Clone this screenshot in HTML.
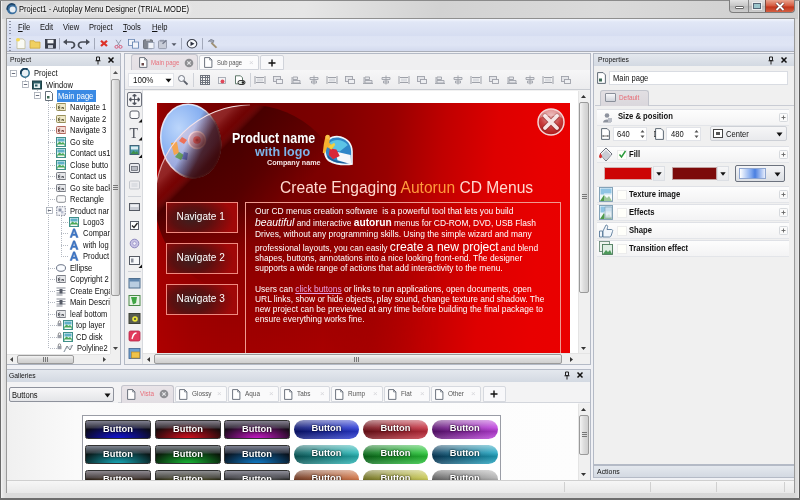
<!DOCTYPE html>
<html><head><meta charset="utf-8"><title>Project1 - Autoplay Menu Designer</title>
<style>
*{box-sizing:border-box;margin:0;padding:0}
html,body{width:800px;height:500px;overflow:hidden}
body{position:relative;background:#f0f0f0;font-family:"Liberation Sans",sans-serif;font-size:8.6px;color:#111;line-height:1}
.a{position:absolute}
.t{position:absolute;white-space:nowrap;line-height:12px;height:12px;font-size:8.5px;transform-origin:0 50%;transform:scaleX(.89)}
.b{font-weight:bold}
u{text-decoration:underline}
#frame{left:0;top:0;width:800px;height:500px;background:linear-gradient(90deg,#f2f2f2 0,#dcdcdc 6px,#d8d8d8 794px,#e6e6e6 800px)}
#title{left:0;top:0;width:800px;height:19px;background:linear-gradient(100deg,#d4d4d4 0%,#e2e2e2 22%,#e6e6e6 38%,#d2d2d2 55%,#dadada 75%,#cecece 100%)}
#menubar{left:7px;top:19px;width:787px;height:17px;background:linear-gradient(#f3f6fd 0,#e1e7f6 3px,#d6ddf1 100%)}
#toolbar{left:7px;top:36px;width:787px;height:16px;background:linear-gradient(#dde3f4 0,#dfe5f5 60%,#d3daee 100%);border-bottom:1px solid #a9adb8}
#client{left:7px;top:52px;width:787px;height:428px;background:#f0f1f5}
#status{left:7px;top:480px;width:787px;height:12px;background:linear-gradient(#f4f4f4,#e6e6e6);border-top:1px solid #c9c9c9}
</style></head><body><div id="all" class="a" style="left:0;top:0;width:800px;height:500px;overflow:hidden;filter:blur(.4px)">
<div id="frame" class="a"></div>
<div id="title" class="a"></div>
<div id="menubar" class="a"></div>
<div id="toolbar" class="a"></div>
<div id="client" class="a"></div>
<div id="status" class="a"></div>
<!--TITLE-->
<div class="a" style="left:0;top:0;width:1px;height:500px;background:#6a6a6a"></div>
<div class="a" style="left:1px;top:0;width:1px;height:500px;background:#f2f2f2"></div>
<div class="a" style="left:799px;top:0;width:1px;height:500px;background:#5a5a5a"></div>
<div class="a" style="left:798px;top:0;width:1px;height:500px;background:#e8e8e8"></div>
<div class="a" style="left:0;top:0;width:800px;height:1px;background:#8a8a8a"></div>
<div class="a" style="left:0;top:498px;width:800px;height:2px;background:#6e6e6e"></div>
<div class="a" style="left:6px;top:18px;width:789px;height:475px;border:1px solid #9a9a9a;border-top-color:#8f8f8f"></div>
<svg class="a" style="left:6px;top:3px" width="12" height="12" viewBox="0 0 12 12"><circle cx="6" cy="6" r="5.2" fill="#3a6f9f"/><circle cx="6.6" cy="6.4" r="3" fill="#e8eef4"/><path d="M1.5 7 A4.6 4.6 0 0 1 9 2.2" stroke="#1d4468" stroke-width="1.6" fill="none"/></svg>
<div class="t" id="ttl" style="left:19px;top:3px;color:#000;text-shadow:0 0 4px #fff,0 0 6px #fff,0 0 8px #fff">Project1 - Autoplay Menu Designer (TRIAL MODE)</div>
<div class="a" style="left:729px;top:0;width:66px;height:13px;border:1px solid #7d7d7d;border-top:none;border-radius:0 0 4px 4px;background:linear-gradient(#e2e2e2,#c6c6c6 50%,#b9b9b9 51%,#cdcdcd);overflow:hidden">
 <div class="a" style="left:18px;top:0;width:1px;height:13px;background:#8a8a8a"></div>
 <div class="a" style="left:35px;top:0;width:30px;height:13px;background:linear-gradient(#e8a48f,#d4553a 48%,#c0321a 52%,#d8694a);border-left:1px solid #7a4a40"></div>
 <div class="a" style="left:5px;top:6px;width:9px;height:3px;background:#fff;border:1px solid #666;border-radius:1px"></div>
 <div class="a" style="left:23px;top:3px;width:8px;height:6px;background:#9cc6cc;border:1px solid #567;box-shadow:0 0 0 1px #eee"></div>
 <svg class="a" style="left:45px;top:2px" width="10" height="9" viewBox="0 0 10 9"><path d="M1.5 1 L8.5 8 M8.5 1 L1.5 8" stroke="#633" stroke-width="3.2"/><path d="M1.5 1 L8.5 8 M8.5 1 L1.5 8" stroke="#fff" stroke-width="1.8"/></svg>
</div>
<!--MENU-->
<div class="a" style="left:9px;top:21px;width:2px;height:14px;background:repeating-linear-gradient(#8d93a6 0 1px,transparent 1px 3px)"></div>
<div class="a" style="left:9px;top:38px;width:2px;height:13px;background:repeating-linear-gradient(#8d93a6 0 1px,transparent 1px 3px)"></div>
<div class="t" style="left:18px;top:21px"><u>F</u>ile</div>
<div class="t" style="left:40px;top:21px">Edit</div>
<div class="t" style="left:63px;top:21px">View</div>
<div class="t" style="left:89px;top:21px">Project</div>
<div class="t" style="left:123px;top:21px"><u>T</u>ools</div>
<div class="t" style="left:152px;top:21px"><u>H</u>elp</div>
<svg class="a" style="left:7px;top:35px" width="230" height="17" viewBox="0 0 230 17"><g transform="translate(0 1.300) scale(1 .88)" opacity=".92">
 <!-- new -->
 <path d="M10 3h6l2 2v9h-8z" fill="#fdfdf5" stroke="#b9b48a" stroke-width=".8"/><circle cx="11" cy="4" r="2" fill="#f6d848"/>
 <!-- open -->
 <path d="M23 5h4l1 1.5h5v7h-10z" fill="#f2cf55" stroke="#c9a02f" stroke-width=".8"/>
 <!-- save -->
 <rect x="38.5" y="3.5" width="10" height="10" fill="#2b2f3c" stroke="#1c1f28" stroke-width=".8"/><rect x="40.5" y="4" width="6" height="4" fill="#f3f5f8"/><rect x="41" y="10" width="5" height="3.5" fill="#c9ced8"/>
 <rect x="52" y="2" width="1" height="13" fill="#9ea4b6"/>
 <!-- undo -->
 <path d="M59 6.5h5a3 3 0 0 1 0 7" fill="none" stroke="#3b3f48" stroke-width="1.8"/><path d="M56 6.5l4-3.5v7z" fill="#3b3f48"/>
 <!-- redo -->
 <path d="M80 6.5h-5a3 3 0 0 0 0 7" fill="none" stroke="#3b3f48" stroke-width="1.8"/><path d="M83 6.5l-4-3.5v7z" fill="#3b3f48"/>
 <rect x="87" y="2" width="1" height="13" fill="#9ea4b6"/>
 <!-- delete -->
 <path d="M94 5l6 6M100 5l-6 6" stroke="#dc2418" stroke-width="2.2"/>
 <!-- cut -->
 <path d="M109 4l4 7M114 4l-4 7" stroke="#8a8fa3" stroke-width="1"/><circle cx="109.5" cy="12" r="1.6" fill="none" stroke="#d64a6a" stroke-width="1"/><circle cx="113.5" cy="12" r="1.6" fill="none" stroke="#d64a6a" stroke-width="1"/>
 <!-- copy -->
 <rect x="121.5" y="3.500" width="6" height="7" fill="#f3f6fb" stroke="#5f7fae" stroke-width=".9"/><rect x="125.5" y="6.500" width="6" height="7" fill="#f3f6fb" stroke="#5f7fae" stroke-width=".9"/>
 <!-- paste -->
 <rect x="136.500" y="4" width="9" height="10" rx="1" fill="#7a7f88" stroke="#50545c" stroke-width=".8"/><rect x="141" y="7" width="6" height="7" fill="#f4f6fa" stroke="#7f8aa0" stroke-width=".7"/><rect x="139" y="3" width="4" height="2" fill="#c9ccd4"/>
 <!-- paste special -->
 <rect x="151.500" y="5" width="8" height="9" rx="1" fill="#c7cbd6" stroke="#7d8496" stroke-width=".8"/><path d="M155 8l4-4 1 1-4 4z" fill="#6b7284"/><rect x="153" y="4" width="4" height="2" fill="#8a90a2"/>
 <path d="M164.500 8h5l-2.500 3z" fill="#4a4f5c"/>
 <rect x="174" y="2" width="1" height="13" fill="#9ea4b6"/>
 <!-- play -->
 <circle cx="185" cy="8.500" r="4.800" fill="#fbfcff" stroke="#2b2f3a" stroke-width="1.100"/><path d="M183.500 6l4 2.500-4 2.500z" fill="#1d2130"/>
 <rect x="195" y="2" width="1" height="13" fill="#9ea4b6"/>
 <!-- build -->
 <path d="M201 6l3-2.500 3 1.500-1 2.500-1.500-.5" fill="#9aa0ae" stroke="#6a7080" stroke-width=".8"/><path d="M204.500 7.500l5 5.500" stroke="#9a8a6a" stroke-width="2"/>
</g></svg>
<!--LEFT-->
<div class="a" style="left:7px;top:53px;width:114px;height:13.500px;background:linear-gradient(#e4e8ee,#d3d9e2);border:1px solid #b4bac6;border-left:none"></div>
<div class="t" style="left:10px;top:53.800px;font-size:7.600px">Project</div>
<svg class="a" style="left:94px;top:55.500px" width="24" height="9" viewBox="0 0 24 9"><path d="M2.500 1h3v3.500h-3zM1.500 4.800h5M4 5v3.500" stroke="#222" stroke-width="1" fill="none"/><path d="M14.500 1.500l5 5M19.500 1.500l-5 5" stroke="#111" stroke-width="1.500"/></svg>
<div class="a" style="left:7px;top:66px;width:114px;height:299px;background:#fff;border:1px solid #aeb4c0;border-left:none;border-top:none"></div>
<div class="a" style="left:13px;top:78px;width:0;height:0"></div>
<svg class="a" style="left:9.5px;top:69.5px" width="7" height="7" viewBox="0 0 7 7"><rect x=".5" y=".5" width="6" height="6" fill="#fff" stroke="#a4aab4" stroke-width=".8"/><path d="M1.800 3.500h3.400" stroke="#596070" stroke-width=".9"/></svg>
<svg class="a" style="left:20px;top:68.0px" width="10" height="10" viewBox="0 0 10 10"><circle cx="5" cy="5" r="4.200" fill="#e9f1f6" stroke="#2f6f8f" stroke-width="1.500"/><path d="M1 6A4.200 4.200 0 0 1 7.500 1.500" stroke="#173f5a" stroke-width="1.800" fill="none"/></svg>
<div class="t" style="left:34px;top:67.0px">Project</div>
<svg class="a" style="left:21.5px;top:81.0px" width="7" height="7" viewBox="0 0 7 7"><rect x=".5" y=".5" width="6" height="6" fill="#fff" stroke="#a4aab4" stroke-width=".8"/><path d="M1.800 3.500h3.400" stroke="#596070" stroke-width=".9"/></svg>
<svg class="a" style="left:32px;top:79.5px" width="10" height="10" viewBox="0 0 10 10"><rect x=".5" y="1" width="9" height="8" fill="#2c5d64" stroke="#1f4046"/><rect x="2" y="3.500" width="6" height="4.500" fill="#e8f2f2"/><rect x="3" y="4.500" width="2.500" height="2" fill="#2c5d64"/></svg>
<div class="t" style="left:46px;top:78.5px">Window</div>
<svg class="a" style="left:33.5px;top:92.4px" width="7" height="7" viewBox="0 0 7 7"><rect x=".5" y=".5" width="6" height="6" fill="#fff" stroke="#a4aab4" stroke-width=".8"/><path d="M1.800 3.500h3.400" stroke="#596070" stroke-width=".9"/></svg>
<svg class="a" style="left:44px;top:90.9px" width="10" height="10" viewBox="0 0 10 10"><path d="M1.500.5h5l2 2v7h-7z" fill="#fff" stroke="#55606c" stroke-width=".9"/><rect x="3" y="5" width="2.500" height="2.500" fill="#3c6a55"/></svg>
<div class="a" style="left:56.5px;top:90.4px;width:39px;height:11.500px;background:#3a8ae4"></div>
<div class="t" style="left:58px;top:89.9px;color:#fff">Main page</div>
<div class="a" style="left:48px;top:107.4px;width:7px;height:1px;background:repeating-linear-gradient(90deg,#b4b9c2 0 1px,transparent 1px 2px)"></div>
<svg class="a" style="left:56px;top:102.4px" width="10" height="10" viewBox="0 0 10 10"><rect x=".5" y="1.500" width="9.500" height="7" rx="1" fill="#efe9c9" stroke="#8a8148" stroke-width=".9"/><path d="M2.500 4v3M3 4h1.200M3 5.500h1.200M3 7h1.200M6 5v2M6 5.500h1.500v1.500" stroke="#4f4a2a" stroke-width=".8" fill="none"/></svg>
<div class="t" style="left:70px;top:101.4px">Navigate 1</div>
<div class="a" style="left:48px;top:118.8px;width:7px;height:1px;background:repeating-linear-gradient(90deg,#b4b9c2 0 1px,transparent 1px 2px)"></div>
<svg class="a" style="left:56px;top:113.8px" width="10" height="10" viewBox="0 0 10 10"><rect x=".5" y="1.500" width="9.500" height="7" rx="1" fill="#efe9c9" stroke="#8a8148" stroke-width=".9"/><path d="M2.500 4v3M3 4h1.200M3 5.500h1.200M3 7h1.200M6 5v2M6 5.500h1.500v1.500" stroke="#4f4a2a" stroke-width=".8" fill="none"/></svg>
<div class="t" style="left:70px;top:112.8px">Navigate 2</div>
<div class="a" style="left:48px;top:130.3px;width:7px;height:1px;background:repeating-linear-gradient(90deg,#b4b9c2 0 1px,transparent 1px 2px)"></div>
<svg class="a" style="left:56px;top:125.3px" width="10" height="10" viewBox="0 0 10 10"><rect x=".5" y="1.500" width="9.500" height="7" rx="1" fill="#f3dcd6" stroke="#a8584c" stroke-width=".9"/><path d="M2.500 4v3M3 4h1.200M3 5.500h1.200M3 7h1.200M6 5v2M6 5.500h1.500v1.500" stroke="#6a2f28" stroke-width=".8" fill="none"/></svg>
<div class="t" style="left:70px;top:124.3px">Navigate 3</div>
<div class="a" style="left:48px;top:141.8px;width:7px;height:1px;background:repeating-linear-gradient(90deg,#b4b9c2 0 1px,transparent 1px 2px)"></div>
<svg class="a" style="left:56px;top:136.8px" width="10" height="10" viewBox="0 0 10 10"><rect x=".5" y=".5" width="9" height="9" fill="#eaf5f4" stroke="#3f8f8a" stroke-width="1"/><rect x="1.500" y="1.500" width="7" height="3" fill="#5fb0c8"/><path d="M1 7l2.500-2.500 2 1.500 1.500-1 2 2v2h-8z" fill="#4aa858"/><rect x="1.500" y="7.500" width="7" height="1.500" fill="#f4f8f8"/></svg>
<div class="t" style="left:70px;top:135.8px">Go site</div>
<div class="a" style="left:48px;top:153.2px;width:7px;height:1px;background:repeating-linear-gradient(90deg,#b4b9c2 0 1px,transparent 1px 2px)"></div>
<svg class="a" style="left:56px;top:148.2px" width="10" height="10" viewBox="0 0 10 10"><rect x=".5" y=".5" width="9" height="9" fill="#eaf5f4" stroke="#3f8f8a" stroke-width="1"/><rect x="1.500" y="1.500" width="7" height="3" fill="#5fb0c8"/><path d="M1 7l2.500-2.500 2 1.500 1.500-1 2 2v2h-8z" fill="#4aa858"/><rect x="1.500" y="7.500" width="7" height="1.500" fill="#f4f8f8"/></svg>
<div class="t" style="left:70px;top:147.2px">Contact us1</div>
<div class="a" style="left:48px;top:164.7px;width:7px;height:1px;background:repeating-linear-gradient(90deg,#b4b9c2 0 1px,transparent 1px 2px)"></div>
<svg class="a" style="left:56px;top:159.7px" width="10" height="10" viewBox="0 0 10 10"><rect x=".5" y=".5" width="9" height="9" fill="#eaf5f4" stroke="#3f8f8a" stroke-width="1"/><rect x="1.500" y="1.500" width="7" height="3" fill="#5fb0c8"/><path d="M1 7l2.500-2.500 2 1.500 1.500-1 2 2v2h-8z" fill="#4aa858"/><rect x="1.500" y="7.500" width="7" height="1.500" fill="#f4f8f8"/></svg>
<div class="t" style="left:70px;top:158.7px">Close butto</div>
<div class="a" style="left:48px;top:176.1px;width:7px;height:1px;background:repeating-linear-gradient(90deg,#b4b9c2 0 1px,transparent 1px 2px)"></div>
<svg class="a" style="left:56px;top:171.1px" width="10" height="10" viewBox="0 0 10 10"><rect x=".5" y="1.500" width="9.500" height="7" rx="1" fill="#e6e7ea" stroke="#6c6f78" stroke-width=".9"/><path d="M2.500 4v3M3 4h1.200M3 5.500h1.200M3 7h1.200M6 5v2M6 5.500h1.500v1.500" stroke="#3f424a" stroke-width=".8" fill="none"/></svg>
<div class="t" style="left:70px;top:170.1px">Contact us</div>
<div class="a" style="left:48px;top:187.6px;width:7px;height:1px;background:repeating-linear-gradient(90deg,#b4b9c2 0 1px,transparent 1px 2px)"></div>
<svg class="a" style="left:56px;top:182.6px" width="10" height="10" viewBox="0 0 10 10"><rect x=".5" y="1.500" width="9.500" height="7" rx="1" fill="#e6e7ea" stroke="#6c6f78" stroke-width=".9"/><path d="M2.500 4v3M3 4h1.200M3 5.500h1.200M3 7h1.200M6 5v2M6 5.500h1.500v1.500" stroke="#3f424a" stroke-width=".8" fill="none"/></svg>
<div class="t" style="left:70px;top:181.6px">Go site back</div>
<div class="a" style="left:48px;top:199.1px;width:7px;height:1px;background:repeating-linear-gradient(90deg,#b4b9c2 0 1px,transparent 1px 2px)"></div>
<svg class="a" style="left:56px;top:194.1px" width="10" height="10" viewBox="0 0 10 10"><rect x=".7" y="1.700" width="9" height="6.600" rx="1.800" fill="#fafafa" stroke="#7c7f86" stroke-width=".9"/></svg>
<div class="t" style="left:70px;top:193.1px">Rectangle</div>
<svg class="a" style="left:45.5px;top:207.0px" width="7" height="7" viewBox="0 0 7 7"><rect x=".5" y=".5" width="6" height="6" fill="#fff" stroke="#a4aab4" stroke-width=".8"/><path d="M1.800 3.500h3.400" stroke="#596070" stroke-width=".9"/></svg>
<svg class="a" style="left:56px;top:205.5px" width="10" height="10" viewBox="0 0 10 10"><rect x=".7" y=".7" width="8.600" height="8.600" fill="#f4f5f8" stroke="#6c7384" stroke-width=".9" stroke-dasharray="1.500 1"/><rect x="2.500" y="2.500" width="3" height="3" fill="#8b93a8"/><rect x="5" y="5" width="2.500" height="2.500" fill="#b9bfd0"/></svg>
<div class="t" style="left:70px;top:204.5px">Product nar</div>
<div class="a" style="left:61px;top:222.0px;width:7px;height:1px;background:repeating-linear-gradient(90deg,#b4b9c2 0 1px,transparent 1px 2px)"></div>
<svg class="a" style="left:69px;top:217.0px" width="10" height="10" viewBox="0 0 10 10"><rect x=".5" y=".5" width="9" height="9" fill="#eaf5f4" stroke="#3f8f8a" stroke-width="1"/><rect x="1.500" y="1.500" width="7" height="3" fill="#5fb0c8"/><path d="M1 7l2.500-2.500 2 1.500 1.500-1 2 2v2h-8z" fill="#4aa858"/><rect x="1.500" y="7.500" width="7" height="1.500" fill="#f4f8f8"/></svg>
<div class="t" style="left:83px;top:216.0px">Logo3</div>
<div class="a" style="left:61px;top:233.4px;width:7px;height:1px;background:repeating-linear-gradient(90deg,#b4b9c2 0 1px,transparent 1px 2px)"></div>
<svg class="a" style="left:69px;top:228.4px" width="10" height="10" viewBox="0 0 10 10"><path d="M1 9.500L4.300.8h1.600L9.200 9.500H7.300L6.600 7.500H3.500L2.800 9.500z M4 6h2.200L5.100 2.800z" fill="#3f78c8" stroke="#2a5aa3" stroke-width=".4"/></svg>
<div class="t" style="left:83px;top:227.4px">Compan</div>
<div class="a" style="left:61px;top:244.9px;width:7px;height:1px;background:repeating-linear-gradient(90deg,#b4b9c2 0 1px,transparent 1px 2px)"></div>
<svg class="a" style="left:69px;top:239.9px" width="10" height="10" viewBox="0 0 10 10"><path d="M1 9.500L4.300.8h1.600L9.200 9.500H7.300L6.600 7.500H3.500L2.800 9.500z M4 6h2.200L5.100 2.800z" fill="#3f78c8" stroke="#2a5aa3" stroke-width=".4"/></svg>
<div class="t" style="left:83px;top:238.9px">with log</div>
<div class="a" style="left:61px;top:256.4px;width:7px;height:1px;background:repeating-linear-gradient(90deg,#b4b9c2 0 1px,transparent 1px 2px)"></div>
<svg class="a" style="left:69px;top:251.4px" width="10" height="10" viewBox="0 0 10 10"><path d="M1 9.500L4.300.8h1.600L9.200 9.500H7.300L6.600 7.500H3.500L2.800 9.500z M4 6h2.200L5.100 2.800z" fill="#3f78c8" stroke="#2a5aa3" stroke-width=".4"/></svg>
<div class="t" style="left:83px;top:250.4px">Product</div>
<div class="a" style="left:48px;top:267.8px;width:7px;height:1px;background:repeating-linear-gradient(90deg,#b4b9c2 0 1px,transparent 1px 2px)"></div>
<svg class="a" style="left:56px;top:262.8px" width="10" height="10" viewBox="0 0 10 10"><ellipse cx="5" cy="5" rx="4.500" ry="3.300" fill="#fafcff" stroke="#5a6478" stroke-width=".9"/></svg>
<div class="t" style="left:70px;top:261.8px">Ellipse</div>
<div class="a" style="left:48px;top:279.3px;width:7px;height:1px;background:repeating-linear-gradient(90deg,#b4b9c2 0 1px,transparent 1px 2px)"></div>
<svg class="a" style="left:56px;top:274.3px" width="10" height="10" viewBox="0 0 10 10"><rect x=".5" y="1.500" width="9.500" height="7" rx="1" fill="#e6e7ea" stroke="#6c6f78" stroke-width=".9"/><path d="M2.500 4v3M3 4h1.200M3 5.500h1.200M3 7h1.200M6 5v2M6 5.500h1.500v1.500" stroke="#3f424a" stroke-width=".8" fill="none"/></svg>
<div class="t" style="left:70px;top:273.3px">Copyright 2</div>
<div class="a" style="left:48px;top:290.7px;width:7px;height:1px;background:repeating-linear-gradient(90deg,#b4b9c2 0 1px,transparent 1px 2px)"></div>
<svg class="a" style="left:56px;top:285.7px" width="10" height="10" viewBox="0 0 10 10"><path d="M.5 2h9M.5 4.500h9M.5 7h9M.5 9h6" stroke="#7a7f8a" stroke-width=".9"/><rect x="3.500" y="3" width="3" height="4.500" fill="#555a66"/></svg>
<div class="t" style="left:70px;top:284.7px">Create Enga</div>
<div class="a" style="left:48px;top:302.2px;width:7px;height:1px;background:repeating-linear-gradient(90deg,#b4b9c2 0 1px,transparent 1px 2px)"></div>
<svg class="a" style="left:56px;top:297.2px" width="10" height="10" viewBox="0 0 10 10"><path d="M.5 2h9M.5 4.500h9M.5 7h9M.5 9h6" stroke="#7a7f8a" stroke-width=".9"/><rect x="3.500" y="3" width="3" height="4.500" fill="#555a66"/></svg>
<div class="t" style="left:70px;top:296.2px">Main Descri</div>
<div class="a" style="left:48px;top:313.7px;width:7px;height:1px;background:repeating-linear-gradient(90deg,#b4b9c2 0 1px,transparent 1px 2px)"></div>
<svg class="a" style="left:56px;top:308.7px" width="10" height="10" viewBox="0 0 10 10"><rect x=".5" y="1.500" width="9.500" height="7" rx="1" fill="#e6e7ea" stroke="#6c6f78" stroke-width=".9"/><path d="M2.500 4v3M3 4h1.200M3 5.500h1.200M3 7h1.200M6 5v2M6 5.500h1.500v1.500" stroke="#3f424a" stroke-width=".8" fill="none"/></svg>
<div class="t" style="left:70px;top:307.7px">leaf bottom</div>
<div class="a" style="left:50px;top:325.1px;width:7px;height:1px;background:repeating-linear-gradient(90deg,#b4b9c2 0 1px,transparent 1px 2px)"></div>
<svg class="a" style="left:57px;top:320.1px" width="5" height="7" viewBox="0 0 5 7"><path d="M1.300 3V2a1.200 1.200 0 0 1 2.400 0v1" fill="none" stroke="#777" stroke-width=".8"/><rect x=".5" y="3" width="4" height="3.200" fill="#9a9da6"/></svg>
<svg class="a" style="left:63px;top:320.1px" width="10" height="10" viewBox="0 0 10 10"><rect x=".5" y=".5" width="9" height="9" fill="#eaf5f4" stroke="#3f8f8a" stroke-width="1"/><rect x="1.500" y="1.500" width="7" height="3" fill="#5fb0c8"/><path d="M1 7l2.500-2.500 2 1.500 1.500-1 2 2v2h-8z" fill="#4aa858"/><rect x="1.500" y="7.500" width="7" height="1.500" fill="#f4f8f8"/></svg>
<div class="t" style="left:76px;top:319.1px">top layer</div>
<div class="a" style="left:50px;top:336.6px;width:7px;height:1px;background:repeating-linear-gradient(90deg,#b4b9c2 0 1px,transparent 1px 2px)"></div>
<svg class="a" style="left:57px;top:331.6px" width="5" height="7" viewBox="0 0 5 7"><path d="M1.300 3V2a1.200 1.200 0 0 1 2.400 0v1" fill="none" stroke="#777" stroke-width=".8"/><rect x=".5" y="3" width="4" height="3.200" fill="#9a9da6"/></svg>
<svg class="a" style="left:63px;top:331.6px" width="10" height="10" viewBox="0 0 10 10"><rect x=".5" y=".5" width="9" height="9" fill="#eaf5f4" stroke="#3f8f8a" stroke-width="1"/><rect x="1.500" y="1.500" width="7" height="3" fill="#5fb0c8"/><path d="M1 7l2.500-2.500 2 1.500 1.500-1 2 2v2h-8z" fill="#4aa858"/><rect x="1.500" y="7.500" width="7" height="1.500" fill="#f4f8f8"/></svg>
<div class="t" style="left:76px;top:330.6px">CD disk</div>
<div class="a" style="left:50px;top:348.0px;width:7px;height:1px;background:repeating-linear-gradient(90deg,#b4b9c2 0 1px,transparent 1px 2px)"></div>
<svg class="a" style="left:57px;top:343.0px" width="5" height="7" viewBox="0 0 5 7"><path d="M1.300 3V2a1.200 1.200 0 0 1 2.400 0v1" fill="none" stroke="#777" stroke-width=".8"/><rect x=".5" y="3" width="4" height="3.200" fill="#9a9da6"/></svg>
<svg class="a" style="left:63px;top:343.0px" width="10" height="10" viewBox="0 0 10 10"><path d="M1 9L4 3l3 4 2.500-5" fill="none" stroke="#7a8086" stroke-width="1"/><path d="M1 9c2-5 5-4 8-7" fill="none" stroke="#a9b7c4" stroke-width=".8"/></svg>
<div class="t" style="left:77px;top:342.0px">Polyline2</div>
<div class="a" style="left:48px;top:100.9px;width:1px;height:247.1px;background:repeating-linear-gradient(#b4b9c2 0 1px,transparent 1px 2px)"></div>
<div class="a" style="left:61px;top:215.5px;width:1px;height:40.8px;background:repeating-linear-gradient(#b4b9c2 0 1px,transparent 1px 2px)"></div>
<div class="a" style="left:25px;top:78.0px;width:1px;height:2.5px;background:repeating-linear-gradient(#b4b9c2 0 1px,transparent 1px 2px)"></div>
<div class="a" style="left:37px;top:89.5px;width:1px;height:2.5px;background:repeating-linear-gradient(#b4b9c2 0 1px,transparent 1px 2px)"></div>
<div class="a" style="left:110px;top:66px;width:10px;height:288px;background:#f0f0f0;border-left:1px solid #e2e2e2"></div>
<div class="a" style="left:111px;top:79px;width:9px;height:217px;background:linear-gradient(90deg,#f3f3f3,#dadada 50%,#cfcfcf);border:1px solid #9a9a9a;border-radius:2px"></div>
<div class="a" style="left:113px;top:185px;width:5px;height:5px;background:repeating-linear-gradient(#777 0 1px,transparent 1px 2px)"></div>
<svg class="a" style="left:112px;top:70px" width="7" height="5" viewBox="0 0 7 5"><path d="M1 4l2.500-3 2.500 3z" fill="#555"/></svg>
<svg class="a" style="left:112px;top:346px" width="7" height="5" viewBox="0 0 7 5"><path d="M1 1l2.500 3 2.500-3z" fill="#444"/></svg>
<div class="a" style="left:7px;top:354px;width:113px;height:10px;background:#f0f0f0;border-top:1px solid #e2e2e2"></div>
<div class="a" style="left:17px;top:355px;width:57px;height:9px;background:linear-gradient(#f3f3f3,#dadada 50%,#cfcfcf);border:1px solid #9a9a9a;border-radius:2px"></div>
<div class="a" style="left:43px;top:357px;width:5px;height:5px;background:repeating-linear-gradient(90deg,#777 0 1px,transparent 1px 2px)"></div>
<svg class="a" style="left:9px;top:356px" width="5" height="7" viewBox="0 0 5 7"><path d="M4 1l-3 2.500 3 2.500z" fill="#444"/></svg>
<svg class="a" style="left:102px;top:356px" width="5" height="7" viewBox="0 0 5 7"><path d="M1 1l3 2.500-3 2.500z" fill="#444"/></svg>
<div class="a" style="left:110px;top:354px;width:10px;height:10px;background:#f0f0f0"></div>
<!--CENTER-->
<div class="a" style="left:124px;top:53px;width:467px;height:312px;background:#f1f1f1;border:1px solid #b4bac6"></div>
<div class="a" style="left:125px;top:54px;width:465px;height:16.500px;background:#efeff1;border-bottom:1px solid #c6cad2"></div>
<div class="a" style="left:131px;top:54px;width:67px;height:17px;background:linear-gradient(#e9e4e8,#e3dfe4);border:1px solid #c4c4cc;border-bottom:none;border-radius:3px 3px 0 0"></div>
<div class="a" style="left:199px;top:55px;width:60px;height:15px;background:#fbfbfc;border:1px solid #d0d3da;border-radius:2px 2px 0 0"></div>
<div class="a" style="left:260px;top:55px;width:24px;height:15px;background:#f8f8fa;border:1px solid #d0d3da;border-radius:2px 2px 0 0"></div>
<svg class="a" style="left:139px;top:57px" width="9" height="11" viewBox="0 0 9 11"><path d="M.6.6h5l2.300 2.300v7.500h-7.300z" fill="#fff" stroke="#5c6470" stroke-width=".9"/><path d="M5.600.6v2.300h2.300" fill="none" stroke="#5c6470" stroke-width=".7"/><rect x="2.500" y="6" width="2.500" height="2.500" fill="#6b4a4a"/></svg>
<div class="t" style="left:151px;top:56.5px;color:#e8707c;font-size:6.800px">Main page</div>
<svg class="a" style="left:184px;top:58px" width="10" height="10" viewBox="0 0 10 10"><circle cx="5" cy="5" r="4.300" fill="#8e8e92"/><path d="M3.300 3.300l3.400 3.400M6.700 3.300l-3.400 3.400" stroke="#e6e6e8" stroke-width="1.200"/></svg>
<svg class="a" style="left:204px;top:57px" width="9" height="11" viewBox="0 0 9 11"><path d="M.6.6h5l2.300 2.300v7.500h-7.300z" fill="#fff" stroke="#5c6470" stroke-width=".9"/><path d="M5.600.6v2.300h2.300" fill="none" stroke="#5c6470" stroke-width=".7"/></svg>
<div class="t" style="left:217px;top:56.5px;color:#555;font-size:6.600px">Sub page</div>
<div class="t" style="left:249px;top:56.5px;color:#d6d6db;font-size:8px;transform:none">×</div>
<svg class="a" style="left:268px;top:59px" width="8" height="8" viewBox="0 0 8 8"><path d="M4 .5v7M.5 4h7" stroke="#111" stroke-width="1.400"/></svg>
<div class="a" style="left:125px;top:70px;width:465px;height:20px;background:linear-gradient(#f6f6f7,#ececee);border-bottom:1px solid #c9ccd2"></div>
<div class="a" style="left:128px;top:73px;width:46px;height:14px;background:#fff;border:1px solid #e1e3e8"></div>
<div class="t" style="left:133px;top:74px;font-size:9px">100%</div>
<svg class="a" style="left:165px;top:78px" width="7" height="5" viewBox="0 0 7 5"><path d="M.5.8h6L3.500 4.500z" fill="#111"/></svg>
<svg class="a" style="left:177px;top:74px" width="12" height="12" viewBox="0 0 12 12"><circle cx="4.500" cy="4.500" r="3" fill="#f4f6fa" stroke="#70757f" stroke-width="1"/><path d="M6.800 6.800l3.700 3.700" stroke="#5a5f69" stroke-width="1.800"/></svg>
<div class="a" style="left:193px;top:73px;width:1px;height:14px;background:#cfd2d8"></div>
<div class="a" style="left:200px;top:75px;width:10px;height:10px;background:repeating-linear-gradient(90deg,#6d727c 0 1px,transparent 1px 2.250px),repeating-linear-gradient(#6d727c 0 1px,#f2f2f2 1px 2.250px)"></div>
<svg class="a" style="left:217px;top:75px" width="30" height="11" viewBox="0 0 30 11"><rect x="1.500" y="2.500" width="7" height="6" fill="#f4f4f6" stroke="#9a9ea8" stroke-width=".8"/><circle cx="5.500" cy="6.500" r="2" fill="#e0485a"/><path d="M18.500.8h5l2 2v6h-7z" fill="#fff" stroke="#4e6a5a" stroke-width=".9"/><rect x="21" y="5.500" width="7" height="4" rx="2" fill="#dfe6e2" stroke="#222" stroke-width=".9"/><circle cx="26" cy="7.500" r="1.300" fill="#222"/></svg>
<div class="a" style="left:250px;top:73px;width:1px;height:14px;background:#cfd2d8"></div>
<svg class="a" style="left:0;top:74px" width="600" height="12" viewBox="0 0 600 12"><path d="M255 2v8M265 2v8M256 3.500h8M256 8.500h8" stroke="#9ea1a9" stroke-width="1" fill="none"/><rect x="257" y="4.500" width="6" height="3" fill="#d9dbe0"/><rect x="273.5" y="2.500" width="7" height="5" fill="#e4e5e9" stroke="#9ea1a9" stroke-width=".9"/><rect x="276.5" y="5.500" width="6" height="4" fill="#eeeff2" stroke="#9ea1a9" stroke-width=".9"/><path d="M291 9.500h10M292 9V3M293 6.500h7v2.500h-7zM293 3h4.500v2.500h-4.500z" stroke="#9ea1a9" stroke-width=".9" fill="#e7e8ec"/><path d="M314 1.500v9M310 3.500h8v2h-8zM311.5 7h5v2h-5z" stroke="#9ea1a9" stroke-width=".9" fill="#e7e8ec"/><path d="M327 2v8M337 2v8M328 3.500h8M328 8.500h8" stroke="#9ea1a9" stroke-width="1" fill="none"/><rect x="329" y="4.500" width="6" height="3" fill="#d9dbe0"/><rect x="345.5" y="2.500" width="7" height="5" fill="#e4e5e9" stroke="#9ea1a9" stroke-width=".9"/><rect x="348.5" y="5.500" width="6" height="4" fill="#eeeff2" stroke="#9ea1a9" stroke-width=".9"/><path d="M363 9.500h10M364 9V3M365 6.500h7v2.500h-7zM365 3h4.500v2.500h-4.500z" stroke="#9ea1a9" stroke-width=".9" fill="#e7e8ec"/><path d="M386 1.500v9M382 3.500h8v2h-8zM383.5 7h5v2h-5z" stroke="#9ea1a9" stroke-width=".9" fill="#e7e8ec"/><path d="M399 2v8M409 2v8M400 3.500h8M400 8.500h8" stroke="#9ea1a9" stroke-width="1" fill="none"/><rect x="401" y="4.500" width="6" height="3" fill="#d9dbe0"/><rect x="417.5" y="2.500" width="7" height="5" fill="#e4e5e9" stroke="#9ea1a9" stroke-width=".9"/><rect x="420.5" y="5.500" width="6" height="4" fill="#eeeff2" stroke="#9ea1a9" stroke-width=".9"/><path d="M435 9.500h10M436 9V3M437 6.500h7v2.500h-7zM437 3h4.500v2.500h-4.500z" stroke="#9ea1a9" stroke-width=".9" fill="#e7e8ec"/><path d="M458 1.500v9M454 3.500h8v2h-8zM455.5 7h5v2h-5z" stroke="#9ea1a9" stroke-width=".9" fill="#e7e8ec"/><path d="M471 2v8M481 2v8M472 3.500h8M472 8.500h8" stroke="#9ea1a9" stroke-width="1" fill="none"/><rect x="473" y="4.500" width="6" height="3" fill="#d9dbe0"/><rect x="489.5" y="2.500" width="7" height="5" fill="#e4e5e9" stroke="#9ea1a9" stroke-width=".9"/><rect x="492.5" y="5.500" width="6" height="4" fill="#eeeff2" stroke="#9ea1a9" stroke-width=".9"/><path d="M507 9.500h10M508 9V3M509 6.500h7v2.500h-7zM509 3h4.500v2.500h-4.500z" stroke="#9ea1a9" stroke-width=".9" fill="#e7e8ec"/><path d="M530 1.500v9M526 3.500h8v2h-8zM527.5 7h5v2h-5z" stroke="#9ea1a9" stroke-width=".9" fill="#e7e8ec"/><path d="M543 2v8M553 2v8M544 3.500h8M544 8.500h8" stroke="#9ea1a9" stroke-width="1" fill="none"/><rect x="545" y="4.500" width="6" height="3" fill="#d9dbe0"/><rect x="561.5" y="2.500" width="7" height="5" fill="#e4e5e9" stroke="#9ea1a9" stroke-width=".9"/><rect x="564.5" y="5.500" width="6" height="4" fill="#eeeff2" stroke="#9ea1a9" stroke-width=".9"/></svg>
<div class="a" style="left:125px;top:90px;width:18px;height:274px;background:#f0f0f1;border-right:1px solid #d8dade"></div>
<div class="a" style="left:127px;top:92px;width:15px;height:15px;background:#f2f2f4;border:1px solid #6e727c;border-radius:2px"></div>
<svg class="a" style="left:125px;top:90px" width="18" height="274" viewBox="0 0 18 274"><path d="M9.500 5v9M5 9.500h9M9.500 4l-1.800 2h3.600zM9.500 15l-1.800-2h3.600zM4 9.500l2-1.800v3.600zM15 9.500l-2-1.800v3.600z" stroke="#4b4f59" stroke-width=".9" fill="#4b4f59"/><rect x="5" y="21" width="9" height="7.500" rx="2" fill="#fbfbfc" stroke="#5b5f69" stroke-width="1"/><path d="M17 29v3.500h-3.500z" fill="#111"/><text x="4.500" y="48" font-family="Liberation Serif,serif" font-size="14" fill="#4a4e58">T</text><path d="M17 47v3.500h-3.500z" fill="#111"/><rect x="5" y="55.500" width="9" height="9" fill="#4a9aa8" stroke="#3a5a72" stroke-width=".9"/><rect x="6" y="56.500" width="7" height="3" fill="#dcecf3"/><path d="M5.500 64l3-3.500 2 2 1.500-1.500 1.500 3z" fill="#3d8f4c"/><path d="M17 64.500v3.500h-3.500z" fill="#111"/><rect x="4.500" y="73.500" width="10" height="9" rx="1.500" fill="#e9eaee" stroke="#5e626c" stroke-width="1"/><rect x="6.500" y="76.500" width="6" height="4" fill="#b7bac2" stroke="#5e626c" stroke-width=".7"/><rect x="4.500" y="91" width="10" height="8" rx="1" fill="#ececef" stroke="#c3c6cc" stroke-width="1"/><rect x="6.500" y="93" width="6" height="4" fill="#dcdee3"/><rect x="3" y="106" width="13" height="1" fill="#cfd2d8"/><rect x="4.500" y="113.500" width="10" height="7" fill="#c9ccd4" stroke="#555a64" stroke-width="1"/><rect x="5.500" y="114.500" width="8" height="2.500" fill="#eef0f4"/><rect x="5.500" y="131.500" width="8" height="8" fill="#fdfdfd" stroke="#5b5f69" stroke-width="1"/><path d="M7 135.500l2 2 3.500-4.500" stroke="#222" stroke-width="1.300" fill="none"/><circle cx="9.500" cy="153.500" r="4.300" fill="#c9c4e6" stroke="#8f8ac0" stroke-width="1"/><circle cx="9.500" cy="153.500" r="1.800" fill="#f1f0fa" stroke="#8f8ac0" stroke-width=".7"/><rect x="4.500" y="166.500" width="10" height="8" fill="#f7f8fa" stroke="#555a64" stroke-width="1"/><rect x="6" y="168.500" width="2.500" height="4" fill="#8a8f9b"/><path d="M17 174.500v3.500h-3.500z" fill="#111"/><rect x="3" y="181" width="13" height="1" fill="#cfd2d8"/><rect x="4" y="188.500" width="11" height="9.500" fill="#b9cde0" stroke="#4f6f8f" stroke-width="1"/><rect x="4.500" y="189" width="10" height="2.500" fill="#5f86ad"/><rect x="4" y="205.500" width="11" height="10" fill="#e9f3e6" stroke="#4c8a4a" stroke-width="1"/><path d="M6 207h6l-1 6-3 1.500z" fill="#3fa544"/><rect x="4" y="223.500" width="11" height="10" fill="#585c50" stroke="#3c4036" stroke-width="1"/><circle cx="10" cy="229" r="2.800" fill="#e8e43a"/><circle cx="10" cy="229" r="1" fill="#444"/><rect x="4" y="241" width="11" height="10" rx="1.500" fill="#e23a5c" stroke="#b3274a" stroke-width=".8"/><path d="M11.500 243c-3 0-3.500 2.500-4.500 6" stroke="#fff" stroke-width="1.400" fill="none"/><rect x="4" y="258.500" width="11" height="10" fill="#6d9fd0" stroke="#4a6d98" stroke-width=".9"/><rect x="6.500" y="262" width="8" height="6" fill="#f0c348" stroke="#b98a28" stroke-width=".7"/></svg>
<div class="a" id="vp" style="left:143px;top:91px;width:435px;height:262px;background:#fff;overflow:hidden"><div class="a" id="cv" style="left:14px;top:12px;width:413px;height:260px;overflow:hidden;background:linear-gradient(96deg,#780000 0,#6e0000 20%,#7e0000 40%,#980000 54%,#c00000 66%,#de0000 78%,#e80000 90%,#ea0000 100%)"><svg class="a" style="left:0;top:0" width="413" height="260" viewBox="0 0 413 260">
<defs>
<radialGradient id="cd" cx="35%" cy="30%" r="75%"><stop offset="0" stop-color="#bcd6fb"/><stop offset=".55" stop-color="#8ab2f2"/><stop offset="1" stop-color="#7394dc"/></radialGradient>
<linearGradient id="sh" x1="0" y1="0" x2="1" y2="1"><stop offset="0" stop-color="#400" stop-opacity="0"/><stop offset=".47" stop-color="#400" stop-opacity="0"/><stop offset=".66" stop-color="#3a0404" stop-opacity=".8"/><stop offset="1" stop-color="#400000" stop-opacity="1"/></linearGradient>
<radialGradient id="bigf" gradientUnits="userSpaceOnUse" cx="105" cy="60" r="175"><stop offset="0" stop-color="#300000" stop-opacity=".72"/><stop offset=".45" stop-color="#300000" stop-opacity=".62"/><stop offset=".8" stop-color="#400000" stop-opacity=".25"/><stop offset="1" stop-color="#400000" stop-opacity="0"/></radialGradient>
<radialGradient id="dk2" gradientUnits="userSpaceOnUse" cx="160" cy="30" r="150" gradientTransform="translate(160 30) scale(1 .75) translate(-160 -30)"><stop offset="0" stop-color="#300000" stop-opacity=".7"/><stop offset=".5" stop-color="#300000" stop-opacity=".5"/><stop offset="1" stop-color="#400000" stop-opacity="0"/></radialGradient>
<linearGradient id="rim" gradientUnits="userSpaceOnUse" x1="15" y1="15" x2="115" y2="115"><stop offset="0" stop-color="#ffb8b8" stop-opacity=".36"/><stop offset=".25" stop-color="#ffb0b0" stop-opacity=".2"/><stop offset=".34" stop-color="#803030" stop-opacity=".05"/><stop offset=".41" stop-color="#200000" stop-opacity=".5"/><stop offset=".7" stop-color="#200000" stop-opacity=".32"/><stop offset="1" stop-color="#200000" stop-opacity="0"/></linearGradient>
<linearGradient id="outl" gradientUnits="userSpaceOnUse" x1="0" y1="0" x2="110" y2="0"><stop offset="0" stop-color="#c80000" stop-opacity=".8"/><stop offset=".03" stop-color="#b80000" stop-opacity=".4"/><stop offset=".3" stop-color="#a80000" stop-opacity=".18"/><stop offset="1" stop-color="#a00000" stop-opacity="0"/></linearGradient>
<clipPath id="bc"><circle cx="93" cy="97" r="95"/></clipPath>
<linearGradient id="bigs" gradientUnits="userSpaceOnUse" x1="0" y1="95" x2="95" y2="0"><stop offset="0" stop-color="#ffd0d0" stop-opacity=".45"/><stop offset=".3" stop-color="#ffe0e0" stop-opacity=".85"/><stop offset=".9" stop-color="#fff0f0" stop-opacity=".95"/><stop offset="1" stop-color="#ffe0e0" stop-opacity=".3"/></linearGradient>
</defs>
<path fill-rule="evenodd" d="M0 0H140V260H0zM-2 97a95 95 0 1 0 190 0a95 95 0 1 0 -190 0z" fill="url(#outl)"/>
<g transform="rotate(-12 33 35)">
<ellipse cx="33" cy="38" rx="29.500" ry="37" fill="url(#cd)"/>
<ellipse cx="33" cy="38" rx="29.500" ry="37" fill="none" stroke="#eef3ff" stroke-width="1.500" stroke-opacity=".9"/>
</g>
<circle cx="40" cy="37" r="8.500" fill="#d0a8b8" fill-opacity=".85" stroke="#f4e6ee" stroke-width="1.500"/>
<circle cx="40" cy="37" r="3.800" fill="#d85050"/><circle cx="40" cy="37" r="1.600" fill="#a03030"/>
<g transform="translate(-3 1)"><path d="M17 39l3 12 5-2-2-11z" fill="#f0a030"/><path d="M21 53l6 3 3-5-5-3z" fill="#3a9a4a"/><path d="M25 37l5 3 3-4-5-3z" fill="#e85a3a"/><path d="M28 55l5 1 1-7-4-1z" fill="#3a68c8"/></g>
<circle cx="93" cy="97" r="95" fill="url(#rim)"/>
<g transform="rotate(-12 33 35)"><ellipse cx="33" cy="38" rx="30.500" ry="38" fill="url(#sh)"/></g>
<path d="M-2 97A95 95 0 0 1 93 2" fill="none" stroke="url(#bigs)" stroke-width="1.100"/>
</svg><div class="a" style="left:0;top:0;width:413px;height:260px;background:linear-gradient(180deg,rgba(190,0,0,0) 40%,rgba(190,0,0,.38) 62%,rgba(190,0,0,.6) 95%);-webkit-mask-image:linear-gradient(90deg,#000 0,#000 40%,transparent 68%);mask-image:linear-gradient(90deg,#000 0,#000 40%,transparent 68%)"></div><div class="a b" style="left:75px;top:27px;font-size:14.500px;line-height:16px;color:#fff;white-space:nowrap;transform-origin:0 0;transform:scaleX(.86);text-shadow:0 0 1px #300">Product name</div><div class="a b" style="left:98px;top:40.500px;font-size:13.500px;line-height:16px;color:#7db4ea;white-space:nowrap;transform-origin:0 0;transform:scaleX(.93)">with logo</div><div class="a b" style="left:110px;top:54.500px;font-size:7.200px;line-height:9px;color:#f4e4e4;white-space:nowrap">Company name</div><svg class="a" style="left:163px;top:30px" width="35" height="35" viewBox="0 0 32 32">
<path d="M4 13C4 5 12 1 19 3C26 5 30 10 30 17L30 29C24 30 14 30 8 26C4 23 3 18 4 13z" fill="#f2f6fa"/>
<path d="M5.500 13C6 6 12 3 18.500 4.500C25 6 28.500 10.500 28.500 17L28.500 27.500C23 28.500 14 28 9 24.500C5.500 22 5 17.500 5.500 13z" fill="#2f86c8"/>
<path d="M9 9C13 5 21 5.500 25.500 11L18 17 11 15z" fill="#5cc4e6"/>
<path d="M7 20c4 5 12 7 21 6l0 1.500c-8 1-17-.5-21-5z" fill="#1f5f9a"/>
<path d="M14 17l14 3 .5 8.500L16 25z" fill="#f6f7fa"/>
<path d="M9 14l6 1 3 6-6 3-4-4z" fill="#d8283a"/>
<path d="M5 3c2-1 4 0 4 2l-.5 4 4 4-2 2-4-2-2 6-2-1 1-8z" fill="#f6b030"/>
<circle cx="7" cy="3.500" r="2" fill="#f8c048"/>
<path d="M8 12l5-3 1 2-4 4z" fill="#f0d040"/>
</svg><svg class="a" style="left:379px;top:4px" width="30" height="30" viewBox="0 0 30 30">
<defs><radialGradient id="cl" cx="50%" cy="30%" r="70%"><stop offset="0" stop-color="#e8a8a8"/><stop offset=".6" stop-color="#c83a3a"/><stop offset="1" stop-color="#a81818"/></radialGradient></defs>
<circle cx="15" cy="15" r="13" fill="url(#cl)" stroke="#f4d4d4" stroke-width="1.500"/>
<path d="M9 9l12 12M21 9L9 21" stroke="#7a2020" stroke-width="5.500" stroke-linecap="round" stroke-opacity=".5"/>
<path d="M9 9l12 12M21 9L9 21" stroke="#f6e4e4" stroke-width="3.800" stroke-linecap="round"/>
<path d="M3.500 11a12 12 0 0 1 23 0c-6-3-17-3-23 0z" fill="#fff" fill-opacity=".35"/>
</svg><div class="a" style="left:123px;top:75px;font-size:15.600px;line-height:20px;color:#ffd9cf;white-space:nowrap">Create Engaging <span style="color:#ff9a3c">Autorun</span> CD Menus</div><div class="a" style="left:9px;top:99px;width:71.500px;height:30.500px;border:1px solid #f08a80;background:radial-gradient(ellipse 60% 90% at 35% 55%,#3c2020 0,#5a1010 45%,#a00808 100%);color:#fff;font-size:10.100px;line-height:28.500px;text-align:center;text-indent:-2px;white-space:nowrap">Navigate 1</div><div class="a" style="left:9px;top:140px;width:71.500px;height:30.500px;border:1px solid #f08a80;background:radial-gradient(ellipse 60% 90% at 35% 55%,#3c2020 0,#5a1010 45%,#a00808 100%);color:#fff;font-size:10.100px;line-height:28.500px;text-align:center;text-indent:-2px;white-space:nowrap">Navigate 2</div><div class="a" style="left:9px;top:181px;width:71.500px;height:30.500px;border:1px solid #f08a80;background:radial-gradient(ellipse 60% 90% at 35% 55%,#3c2020 0,#5a1010 45%,#a00808 100%);color:#fff;font-size:10.100px;line-height:28.500px;text-align:center;text-indent:-2px;white-space:nowrap">Navigate 3</div><div class="a" style="left:88px;top:99px;width:315.500px;height:170px;border:1px solid #f09a90;border-bottom:none"></div><div class="a" style="left:98px;top:100px;height:16px;line-height:16px;font-size:8.430px;color:#fff;white-space:nowrap">Our CD menus creation software&nbsp; is a powerful tool that lets you build</div><div class="a" style="left:98px;top:111.500px;height:16px;line-height:16px;font-size:8.430px;color:#fff;white-space:nowrap"><i style="font-size:10.400px">beautiful</i> and interactive <b style="font-size:10.200px">autorun</b> menus for CD-ROM, DVD, USB Flash</div><div class="a" style="left:98px;top:122.500px;height:16px;line-height:16px;font-size:8.430px;color:#fff;white-space:nowrap">Drives, without any programming skills. Using the simple wizard and many</div><div class="a" style="left:98px;top:135.5px;height:16px;line-height:16px;font-size:8.430px;color:#fff;white-space:nowrap">professional layouts, you can easily <span style="font-size:12.100px">create a new project</span> and blend</div><div class="a" style="left:98px;top:146.5px;height:16px;line-height:16px;font-size:8.430px;color:#fff;white-space:nowrap">shapes, buttons, annotations into a nice looking front-end. The designer</div><div class="a" style="left:98px;top:157px;height:16px;line-height:16px;font-size:8.430px;color:#fff;white-space:nowrap">supports a wide range of actions that add interactivity to the menu.</div><div class="a" style="left:98px;top:177.5px;height:16px;line-height:16px;font-size:8.430px;color:#fff;white-space:nowrap">Users can <span style="color:#e9a0e4;text-decoration:underline">click buttons</span> or links to run applications, open documents, open</div><div class="a" style="left:98px;top:187.500px;height:16px;line-height:16px;font-size:8.430px;color:#fff;white-space:nowrap">URL links, show or hide objects, play sound, change texture and shadow. The</div><div class="a" style="left:98px;top:197.500px;height:16px;line-height:16px;font-size:8.430px;color:#fff;white-space:nowrap">new project can be previewed at any time before building the final package to</div><div class="a" style="left:98px;top:208px;height:16px;line-height:16px;font-size:8.430px;color:#fff;white-space:nowrap">ensure everything works fine.</div></div></div>
<div class="a" style="left:578px;top:91px;width:12px;height:262px;background:#f0f0f0;border-left:1px solid #e4e4e4"></div>
<div class="a" style="left:579px;top:102px;width:10px;height:191px;background:linear-gradient(90deg,#f4f4f4,#dcdcdc 50%,#cfcfcf);border:1px solid #9a9a9a;border-radius:2px"></div>
<div class="a" style="left:581.500px;top:194px;width:5px;height:5px;background:repeating-linear-gradient(#777 0 1px,transparent 1px 2px)"></div>
<svg class="a" style="left:580px;top:94px" width="7" height="5" viewBox="0 0 7 5"><path d="M1 4l2.500-3 2.500 3z" fill="#333"/></svg>
<svg class="a" style="left:580px;top:346px" width="7" height="5" viewBox="0 0 7 5"><path d="M1 1l2.500 3 2.500-3z" fill="#333"/></svg>
<div class="a" style="left:143px;top:353px;width:447px;height:11px;background:#f0f0f0;border-top:1px solid #e4e4e4"></div>
<div class="a" style="left:154px;top:354px;width:408px;height:10px;background:linear-gradient(#f4f4f4,#dcdcdc 50%,#cfcfcf);border:1px solid #9a9a9a;border-radius:2px"></div>
<div class="a" style="left:354px;top:356.500px;width:5px;height:5px;background:repeating-linear-gradient(90deg,#777 0 1px,transparent 1px 2px)"></div>
<svg class="a" style="left:146px;top:355.500px" width="5" height="7" viewBox="0 0 5 7"><path d="M4 1l-3 2.500 3 2.500z" fill="#333"/></svg>
<svg class="a" style="left:569px;top:355.500px" width="5" height="7" viewBox="0 0 5 7"><path d="M1 1l3 2.500-3 2.500z" fill="#333"/></svg>
<!--RIGHT-->
<div class="a" style="left:593px;top:53px;width:201px;height:13.500px;background:linear-gradient(#e4e8ee,#d3d9e2);border:1px solid #b4bac6;border-right:none"></div>
<div class="t" style="left:598px;top:53.800px;font-size:7.600px">Properties</div>
<svg class="a" style="left:767px;top:55.500px" width="24" height="9" viewBox="0 0 24 9"><path d="M2.500 1h3v3.500h-3zM1.500 4.800h5M4 5v3.500" stroke="#222" stroke-width="1" fill="none"/><path d="M14.500 1.500l5 5M19.500 1.500l-5 5" stroke="#111" stroke-width="1.500"/></svg>
<div class="a" style="left:593px;top:66px;width:201px;height:399px;background:#f0f0f0;border-left:1px solid #b4bac6;border-bottom:1px solid #b4bac6"></div>
<svg class="a" style="left:597px;top:72px" width="9" height="12" viewBox="0 0 9 12"><path d="M.6.6h5.500l2.300 2.300v8.500h-7.800z" fill="#fff" stroke="#4e5a66" stroke-width=".9"/><rect x="2" y="6.500" width="3" height="3" fill="#3c6a55"/></svg>
<div class="a" style="left:609px;top:71px;width:179px;height:14px;background:#fff;border:1px solid #d9dce2"></div>
<div class="t" style="left:613px;top:72px">Main page</div>
<div class="a" style="left:595px;top:105px;width:199px;height:1px;background:#c9ccd4"></div>
<div class="a" style="left:600px;top:90px;width:49px;height:16px;background:linear-gradient(#e2dfe3,#dad7dc);border:1px solid #c2c4cc;border-bottom:none;border-radius:3px 3px 0 0"></div>
<div class="a" style="left:605px;top:93px;width:11px;height:9px;background:linear-gradient(#f8f8fa,#cfd2da);border:1px solid #8a8f9a;border-radius:1px"></div>
<div class="t" style="left:619px;top:92px;color:#e86a74;font-size:7.200px">Default</div>
<div class="a" style="left:597px;top:109px;width:192px;height:17px;background:linear-gradient(#fdfdfd,#f3f3f4);border-top:1px solid #dfe1e6;border-bottom:1px solid #e3e5e9"></div>
<div class="t b" style="left:618px;top:109.8px;transform:scaleX(.9)">Size &amp; position</div>
<svg class="a" style="left:602px;top:112px" width="11" height="11" viewBox="0 0 11 11"><circle cx="5" cy="3.500" r="2.300" fill="#8e939e"/><path d="M1 10.500c0-4 8-4 8 0z" fill="#8e939e"/><rect x="6" y="6" width="4" height="4" fill="#b9bdc6"/></svg>
<svg class="a" style="left:779px;top:113px" width="9" height="9" viewBox="0 0 9 9"><rect x=".5" y=".5" width="8" height="8" rx="1" fill="#fafafa" stroke="#cdd0d6" stroke-width=".8"/><path d="M4.500 2.500v4M2.500 4.500h4" stroke="#666" stroke-width=".9"/></svg>
<svg class="a" style="left:601px;top:128px" width="10" height="12" viewBox="0 0 10 12"><path d="M.6.6h5.500l2.300 2.300v8.500h-7.800z" fill="#fff" stroke="#4e5a66" stroke-width=".9"/><path d="M2 8h5M2.500 7l-1 1 1 1M6.500 7l1 1-1 1" stroke="#333" stroke-width=".7" fill="none"/></svg>
<div class="a" style="left:613px;top:127px;width:34px;height:14px;background:#fff;border:1px solid #e1e3e8"></div>
<div class="t" style="left:617px;top:128px">640</div>
<svg class="a" style="left:640px;top:129px" width="5" height="10" viewBox="0 0 5 10"><path d="M.5 3.500l2-2.500 2 2.500zM.5 6.500l2 2.500 2-2.500z" fill="#555"/></svg>
<svg class="a" style="left:654px;top:128px" width="10" height="12" viewBox="0 0 10 12"><path d="M1.600.6h5.500l2.300 2.300v8.500h-7.800z" fill="#fff" stroke="#4e5a66" stroke-width=".9"/><path d="M.8 3v6M0 4l.8-1 .8 1M0 8l.8 1 .8-1" stroke="#333" stroke-width=".7" fill="none"/></svg>
<div class="a" style="left:666px;top:127px;width:35px;height:14px;background:#fff;border:1px solid #e1e3e8"></div>
<div class="t" style="left:671px;top:128px">480</div>
<svg class="a" style="left:694px;top:129px" width="5" height="10" viewBox="0 0 5 10"><path d="M.5 3.500l2-2.500 2 2.500zM.5 6.500l2 2.500 2-2.500z" fill="#555"/></svg>
<div class="a" style="left:710px;top:126px;width:77px;height:15px;background:linear-gradient(#f6f6f7,#e9eaed);border:1px solid #cdd0d6;border-radius:2px"></div>
<svg class="a" style="left:713px;top:129px" width="10" height="9" viewBox="0 0 10 9"><rect x=".5" y=".5" width="9" height="8" fill="#fff" stroke="#444" stroke-width="1"/><rect x="3" y="3" width="4" height="3" fill="#555"/></svg>
<div class="t" style="left:726px;top:128px">Center</div>
<svg class="a" style="left:776px;top:132px" width="7" height="5" viewBox="0 0 7 5"><path d="M.5.5h6L3.500 4.500z" fill="#111"/></svg>
<div class="a" style="left:597px;top:146px;width:192px;height:17px;background:linear-gradient(#fdfdfd,#f3f3f4);border-top:1px solid #dfe1e6;border-bottom:1px solid #e3e5e9"></div>
<div class="a" style="left:617px;top:149.5px;width:10px;height:10px;background:#fffffa;border:1px solid #ececec"></div>
<svg class="a" style="left:618px;top:150px" width="9" height="9" viewBox="0 0 9 9"><path d="M1.500 4.500l2 2.500 4-6" stroke="#2a9a3a" stroke-width="1.400" fill="none"/></svg>
<div class="t b" style="left:629px;top:147.8px;transform:scaleX(.9)">Fill</div>
<svg class="a" style="left:598px;top:147px" width="16" height="16" viewBox="0 0 16 16"><path d="M8 1l6 6-6 7-6-7z" fill="#f4f4f6" stroke="#6a6f7a" stroke-width="1"/><path d="M3 8l5-5 5 5-5 5z" fill="#c9ccd4"/><path d="M1 9c0 3 3 3 3 0l-1.500-3z" fill="#d83030"/></svg>
<svg class="a" style="left:779px;top:150px" width="9" height="9" viewBox="0 0 9 9"><rect x=".5" y=".5" width="8" height="8" rx="1" fill="#fafafa" stroke="#cdd0d6" stroke-width=".8"/><path d="M4.500 2.500v4M2.500 4.500h4" stroke="#666" stroke-width=".9"/></svg>
<div class="a" style="left:604px;top:167px;width:48px;height:13px;background:#cc0505;border:1px solid #d4b0b0"></div>
<div class="a" style="left:653px;top:166px;width:12px;height:15px;background:linear-gradient(#f6f6f7,#e8e9ec);border:1px solid #dcdfe4"></div>
<svg class="a" style="left:656px;top:172px" width="6" height="4" viewBox="0 0 6 4"><path d="M.3.3h5.400L3 3.700z" fill="#111"/></svg>
<div class="a" style="left:672px;top:167px;width:45px;height:13px;background:#7c0a0a;border:1px solid #c0a0a0"></div>
<div class="a" style="left:717px;top:166px;width:12px;height:15px;background:linear-gradient(#f6f6f7,#e8e9ec);border:1px solid #dcdfe4"></div>
<svg class="a" style="left:720px;top:172px" width="6" height="4" viewBox="0 0 6 4"><path d="M.3.3h5.400L3 3.700z" fill="#111"/></svg>
<div class="a" style="left:735px;top:165px;width:50px;height:17px;background:linear-gradient(#f4f5f7,#dcdfe4);border:1px solid #6c727e;border-radius:2px"></div>
<div class="a" style="left:739px;top:168px;width:27px;height:11px;background:linear-gradient(90deg,#ffffff,#7da6ee 45%,#4a7fe0 60%,#e8eefc);border:1px solid #8fa6d0"></div>
<svg class="a" style="left:774px;top:172px" width="7" height="5" viewBox="0 0 7 5"><path d="M.5.5h6L3.500 4.500z" fill="#111"/></svg>
<div class="a" style="left:597px;top:186px;width:192px;height:17px;background:linear-gradient(#fdfdfd,#f3f3f4);border-top:1px solid #dfe1e6;border-bottom:1px solid #e3e5e9"></div>
<div class="a" style="left:617px;top:189.5px;width:10px;height:10px;background:#fffffa;border:1px solid #ececec"></div>
<div class="t b" style="left:629px;top:187.8px;transform:scaleX(.9)">Texture image</div>
<svg class="a" style="left:599px;top:187px" width="14" height="15" viewBox="0 0 14 15"><rect x=".5" y=".5" width="13" height="14" fill="#eef6fa" stroke="#7a9ab0" stroke-width=".9"/><rect x="1.500" y="1.500" width="11" height="6" fill="#8fc4e4"/><path d="M1 14l4-6 3 3 2-2 3 5z" fill="#4e9a4a"/><rect x="5" y="6" width="8" height="8" fill="#fff" fill-opacity=".45"/></svg>
<svg class="a" style="left:779px;top:190px" width="9" height="9" viewBox="0 0 9 9"><rect x=".5" y=".5" width="8" height="8" rx="1" fill="#fafafa" stroke="#cdd0d6" stroke-width=".8"/><path d="M4.500 2.500v4M2.500 4.500h4" stroke="#666" stroke-width=".9"/></svg>
<div class="a" style="left:597px;top:204px;width:192px;height:17px;background:linear-gradient(#fdfdfd,#f3f3f4);border-top:1px solid #dfe1e6;border-bottom:1px solid #e3e5e9"></div>
<div class="a" style="left:617px;top:207.5px;width:10px;height:10px;background:#fffffa;border:1px solid #ececec"></div>
<div class="t b" style="left:629px;top:205.8px;transform:scaleX(.9)">Effects</div>
<svg class="a" style="left:599px;top:205px" width="14" height="15" viewBox="0 0 14 15"><rect x=".5" y=".5" width="13" height="14" fill="#eef6fa" stroke="#7a9ab0" stroke-width=".9"/><rect x="1.500" y="1.500" width="11" height="6" fill="#8fc4e4"/><path d="M1 14l4-6 3 3 2-2 3 5z" fill="#4e9a4a"/><rect x="5" y="6" width="8" height="8" fill="#fff" fill-opacity=".45"/><rect x="6" y="2" width="7" height="11" fill="#dfe8f0" fill-opacity=".7" stroke="#7a9ab0" stroke-width=".6"/></svg>
<svg class="a" style="left:779px;top:208px" width="9" height="9" viewBox="0 0 9 9"><rect x=".5" y=".5" width="8" height="8" rx="1" fill="#fafafa" stroke="#cdd0d6" stroke-width=".8"/><path d="M4.500 2.500v4M2.500 4.500h4" stroke="#666" stroke-width=".9"/></svg>
<div class="a" style="left:597px;top:222px;width:192px;height:17px;background:linear-gradient(#fdfdfd,#f3f3f4);border-top:1px solid #dfe1e6;border-bottom:1px solid #e3e5e9"></div>
<div class="a" style="left:617px;top:225.5px;width:10px;height:10px;background:#fffffa;border:1px solid #ececec"></div>
<div class="t b" style="left:629px;top:223.8px;transform:scaleX(.9)">Shape</div>
<svg class="a" style="left:598px;top:223px" width="16" height="15" viewBox="0 0 16 15"><path d="M1.500 8h3v6h-3zM5 8l3-6c1.500 0 2 1 1.500 2.500L9 6.500h4.500c1 0 1.500 1 1 2l-1.500 4.500c-.3.700-1 1-1.500 1H5z" fill="#f2f6fb" stroke="#5a7a9a" stroke-width=".9"/></svg>
<svg class="a" style="left:779px;top:226px" width="9" height="9" viewBox="0 0 9 9"><rect x=".5" y=".5" width="8" height="8" rx="1" fill="#fafafa" stroke="#cdd0d6" stroke-width=".8"/><path d="M4.500 2.500v4M2.500 4.500h4" stroke="#666" stroke-width=".9"/></svg>
<div class="a" style="left:597px;top:240px;width:192px;height:17px;background:linear-gradient(#fdfdfd,#f3f3f4);border-top:1px solid #dfe1e6;border-bottom:1px solid #e3e5e9"></div>
<div class="a" style="left:617px;top:243.5px;width:10px;height:10px;background:#fffffa;border:1px solid #ececec"></div>
<div class="t b" style="left:629px;top:241.8px;transform:scaleX(.9)">Transition effect</div>
<svg class="a" style="left:599px;top:241px" width="15" height="15" viewBox="0 0 15 15"><rect x=".5" y=".5" width="10" height="10" fill="#eef4ee" stroke="#6a8a7a" stroke-width=".9"/><rect x="3.500" y="3.500" width="10" height="10" fill="#dfeee4" stroke="#4a7a5a" stroke-width=".9"/><path d="M4 13l3-4 2 2 2-2 2 4z" fill="#4e9a5a"/></svg>
<div class="a" style="left:593px;top:465px;width:201px;height:13px;background:linear-gradient(#e4e8ee,#d3d9e2);border:1px solid #b4bac6;border-right:none"></div>
<div class="t" style="left:597px;top:465.500px;font-size:7.800px">Actions</div>
<!--BOTTOM-->
<div class="a" style="left:7px;top:368.500px;width:584px;height:14.500px;background:linear-gradient(#e4e8ee,#d3d9e2);border:1px solid #b4bac6;border-left:none"></div>
<div class="t" style="left:9px;top:370px;font-size:7.600px">Galleries</div>
<svg class="a" style="left:563px;top:370.500px" width="24" height="9" viewBox="0 0 24 9"><path d="M2.500 1h3v3.500h-3zM1.500 4.800h5M4 5v3.500" stroke="#222" stroke-width="1" fill="none"/><path d="M14.500 1.500l5 5M19.500 1.500l-5 5" stroke="#111" stroke-width="1.500"/></svg>
<div class="a" style="left:7px;top:382px;width:584px;height:98px;background:#f3f3f4;border-right:1px solid #b4bac6"></div>
<div class="a" style="left:118px;top:402px;width:472px;height:1px;background:#d3d6dc"></div>
<div class="a" style="left:7px;top:403px;width:571px;height:77px;background:linear-gradient(90deg,#f0f0f0,#fafafa 12%,#fdfdfd)"></div>
<div class="a" style="left:8.500px;top:387px;width:105.500px;height:15px;background:linear-gradient(#f7f7f8,#e4e5e8);border:1px solid #8e929c;border-radius:2px"></div>
<div class="t" style="left:12px;top:388.500px">Buttons</div>
<svg class="a" style="left:104px;top:393px" width="7" height="5" viewBox="0 0 7 5"><path d="M.5.5h6L3.500 4.500z" fill="#111"/></svg>
<div class="a" style="left:121px;top:385px;width:53px;height:18px;background:linear-gradient(#e9e4e8,#e2dee3);border:1px solid #c4c4cc;border-bottom:none;border-radius:3px 3px 0 0"></div>
<svg class="a" style="left:127px;top:388.500px" width="9" height="11" viewBox="0 0 9 11"><path d="M.6.6h5l2.300 2.300v7.500h-7.300z" fill="#fff" stroke="#5c6470" stroke-width=".9"/><path d="M5.600.6v2.300h2.300" fill="none" stroke="#5c6470" stroke-width=".7"/></svg>
<div class="t" style="left:140px;top:388px;color:#e8707c;font-size:7.200px">Vista</div>
<svg class="a" style="left:159px;top:389px" width="10" height="10" viewBox="0 0 10 10"><circle cx="5" cy="5" r="4.300" fill="#8e8e92"/><path d="M3.300 3.300l3.400 3.400M6.700 3.300l-3.400 3.400" stroke="#e6e6e8" stroke-width="1.200"/></svg>
<div class="a" style="left:175px;top:386px;width:52px;height:16px;background:#fafafb;border:1px solid #d6d9df;border-radius:2px 2px 0 0"></div>
<svg class="a" style="left:179px;top:388.500px" width="9" height="11" viewBox="0 0 9 11"><path d="M.6.6h5l2.300 2.300v7.500h-7.300z" fill="#fff" stroke="#5c6470" stroke-width=".9"/><path d="M5.600.6v2.300h2.300" fill="none" stroke="#5c6470" stroke-width=".7"/></svg>
<div class="t" style="left:192px;top:388px;color:#555;font-size:7.200px">Glossy</div>
<div class="t" style="left:217px;top:388px;color:#d6d6db;font-size:8px;transform:none">×</div>
<div class="a" style="left:228px;top:386px;width:51px;height:16px;background:#fafafb;border:1px solid #d6d9df;border-radius:2px 2px 0 0"></div>
<svg class="a" style="left:232px;top:388.500px" width="9" height="11" viewBox="0 0 9 11"><path d="M.6.6h5l2.300 2.300v7.500h-7.300z" fill="#fff" stroke="#5c6470" stroke-width=".9"/><path d="M5.600.6v2.300h2.300" fill="none" stroke="#5c6470" stroke-width=".7"/></svg>
<div class="t" style="left:245px;top:388px;color:#555;font-size:7.200px">Aqua</div>
<div class="t" style="left:269px;top:388px;color:#d6d6db;font-size:8px;transform:none">×</div>
<div class="a" style="left:280px;top:386px;width:50px;height:16px;background:#fafafb;border:1px solid #d6d9df;border-radius:2px 2px 0 0"></div>
<svg class="a" style="left:284px;top:388.500px" width="9" height="11" viewBox="0 0 9 11"><path d="M.6.6h5l2.300 2.300v7.500h-7.300z" fill="#fff" stroke="#5c6470" stroke-width=".9"/><path d="M5.600.6v2.300h2.300" fill="none" stroke="#5c6470" stroke-width=".7"/></svg>
<div class="t" style="left:297px;top:388px;color:#555;font-size:7.200px">Tabs</div>
<div class="t" style="left:320px;top:388px;color:#d6d6db;font-size:8px;transform:none">×</div>
<div class="a" style="left:331px;top:386px;width:52px;height:16px;background:#fafafb;border:1px solid #d6d9df;border-radius:2px 2px 0 0"></div>
<svg class="a" style="left:335px;top:388.500px" width="9" height="11" viewBox="0 0 9 11"><path d="M.6.6h5l2.300 2.300v7.500h-7.300z" fill="#fff" stroke="#5c6470" stroke-width=".9"/><path d="M5.600.6v2.300h2.300" fill="none" stroke="#5c6470" stroke-width=".7"/></svg>
<div class="t" style="left:348px;top:388px;color:#555;font-size:7.200px">Rump</div>
<div class="t" style="left:373px;top:388px;color:#d6d6db;font-size:8px;transform:none">×</div>
<div class="a" style="left:384px;top:386px;width:46px;height:16px;background:#fafafb;border:1px solid #d6d9df;border-radius:2px 2px 0 0"></div>
<svg class="a" style="left:388px;top:388.500px" width="9" height="11" viewBox="0 0 9 11"><path d="M.6.6h5l2.300 2.300v7.500h-7.300z" fill="#fff" stroke="#5c6470" stroke-width=".9"/><path d="M5.600.6v2.300h2.300" fill="none" stroke="#5c6470" stroke-width=".7"/></svg>
<div class="t" style="left:401px;top:388px;color:#555;font-size:7.200px">Flat</div>
<div class="t" style="left:420px;top:388px;color:#d6d6db;font-size:8px;transform:none">×</div>
<div class="a" style="left:431px;top:386px;width:50px;height:16px;background:#fafafb;border:1px solid #d6d9df;border-radius:2px 2px 0 0"></div>
<svg class="a" style="left:435px;top:388.500px" width="9" height="11" viewBox="0 0 9 11"><path d="M.6.6h5l2.300 2.300v7.500h-7.300z" fill="#fff" stroke="#5c6470" stroke-width=".9"/><path d="M5.600.6v2.300h2.300" fill="none" stroke="#5c6470" stroke-width=".7"/></svg>
<div class="t" style="left:448px;top:388px;color:#555;font-size:7.200px">Other</div>
<div class="t" style="left:471px;top:388px;color:#d6d6db;font-size:8px;transform:none">×</div>
<div class="a" style="left:483px;top:386px;width:23px;height:16px;background:#f8f8fa;border:1px solid #d6d9df;border-radius:2px 2px 0 0"></div>
<svg class="a" style="left:490px;top:390px" width="8" height="8" viewBox="0 0 8 8"><path d="M4 .5v7M.5 4h7" stroke="#111" stroke-width="1.400"/></svg>
<div class="a" id="gal" style="left:82px;top:415px;width:419px;height:66px;background:#fff;border:1px solid #9a9da6;border-bottom:none;overflow:hidden">
<div class="a b" style="left:2px;top:4px;width:66px;height:18.500px;border-radius:2.500px;border:1px solid #333;background:linear-gradient(180deg,rgba(225,225,245,.55) 0,rgba(200,200,225,.22) 40%,rgba(255,255,255,0) 48%),radial-gradient(ellipse 62% 95% at 50% 108%,#1414e0 0,#0a0a14 100%);color:#fff;font-size:9.300px;line-height:16px;text-align:center;text-shadow:0 0 2px #000">Button</div>
<div class="a b" style="left:72px;top:4px;width:66px;height:18.500px;border-radius:2.500px;border:1px solid #333;background:linear-gradient(180deg,rgba(225,225,245,.55) 0,rgba(200,200,225,.22) 40%,rgba(255,255,255,0) 48%),radial-gradient(ellipse 62% 95% at 50% 108%,#e01020 0,#140a0a 100%);color:#fff;font-size:9.300px;line-height:16px;text-align:center;text-shadow:0 0 2px #000">Button</div>
<div class="a b" style="left:141px;top:4px;width:66px;height:18.500px;border-radius:2.500px;border:1px solid #333;background:linear-gradient(180deg,rgba(225,225,245,.55) 0,rgba(200,200,225,.22) 40%,rgba(255,255,255,0) 48%),radial-gradient(ellipse 62% 95% at 50% 108%,#d018d0 0,#140a14 100%);color:#fff;font-size:9.300px;line-height:16px;text-align:center;text-shadow:0 0 2px #000">Button</div>
<div class="a b" style="left:211px;top:4px;width:65px;height:18.500px;border-radius:9.500px;background:linear-gradient(180deg,rgba(255,255,255,.55) 0,rgba(255,255,255,.12) 40%,rgba(0,0,0,.15) 60%,rgba(255,255,255,.2) 100%),linear-gradient(90deg,#0a1470,#2a3ad8);color:#fff;font-size:9.300px;line-height:17px;text-align:center;text-shadow:0 0 2px #000">Button</div>
<div class="a b" style="left:280px;top:4px;width:65px;height:18.500px;border-radius:9.500px;background:linear-gradient(180deg,rgba(255,255,255,.55) 0,rgba(255,255,255,.12) 40%,rgba(0,0,0,.15) 60%,rgba(255,255,255,.2) 100%),linear-gradient(90deg,#701018,#c83040);color:#fff;font-size:9.300px;line-height:17px;text-align:center;text-shadow:0 0 2px #000">Button</div>
<div class="a b" style="left:349px;top:4px;width:65.5px;height:18.500px;border-radius:9.500px;background:linear-gradient(180deg,rgba(255,255,255,.55) 0,rgba(255,255,255,.12) 40%,rgba(0,0,0,.15) 60%,rgba(255,255,255,.2) 100%),linear-gradient(90deg,#5a1070,#c040e0);color:#fff;font-size:9.300px;line-height:17px;text-align:center;text-shadow:0 0 2px #000">Button</div>
<div class="a b" style="left:2px;top:29px;width:66px;height:18.500px;border-radius:2.500px;border:1px solid #333;background:linear-gradient(180deg,rgba(225,225,245,.55) 0,rgba(200,200,225,.22) 40%,rgba(255,255,255,0) 48%),radial-gradient(ellipse 62% 95% at 50% 108%,#18b0c0 0,#081414 100%);color:#fff;font-size:9.300px;line-height:16px;text-align:center;text-shadow:0 0 2px #000">Button</div>
<div class="a b" style="left:72px;top:29px;width:66px;height:18.500px;border-radius:2.500px;border:1px solid #333;background:linear-gradient(180deg,rgba(225,225,245,.55) 0,rgba(200,200,225,.22) 40%,rgba(255,255,255,0) 48%),radial-gradient(ellipse 62% 95% at 50% 108%,#18c038 0,#081408 100%);color:#fff;font-size:9.300px;line-height:16px;text-align:center;text-shadow:0 0 2px #000">Button</div>
<div class="a b" style="left:141px;top:29px;width:66px;height:18.500px;border-radius:2.500px;border:1px solid #333;background:linear-gradient(180deg,rgba(225,225,245,.55) 0,rgba(200,200,225,.22) 40%,rgba(255,255,255,0) 48%),radial-gradient(ellipse 62% 95% at 50% 108%,#1080d0 0,#08101a 100%);color:#fff;font-size:9.300px;line-height:16px;text-align:center;text-shadow:0 0 2px #000">Button</div>
<div class="a b" style="left:211px;top:29px;width:65px;height:18.500px;border-radius:9.500px;background:linear-gradient(180deg,rgba(255,255,255,.55) 0,rgba(255,255,255,.12) 40%,rgba(0,0,0,.15) 60%,rgba(255,255,255,.2) 100%),linear-gradient(90deg,#0a5a5a,#28b8b8);color:#fff;font-size:9.300px;line-height:17px;text-align:center;text-shadow:0 0 2px #000">Button</div>
<div class="a b" style="left:280px;top:29px;width:65px;height:18.500px;border-radius:9.500px;background:linear-gradient(180deg,rgba(255,255,255,.55) 0,rgba(255,255,255,.12) 40%,rgba(0,0,0,.15) 60%,rgba(255,255,255,.2) 100%),linear-gradient(90deg,#0a6a1a,#28c838);color:#fff;font-size:9.300px;line-height:17px;text-align:center;text-shadow:0 0 2px #000">Button</div>
<div class="a b" style="left:349px;top:29px;width:65.5px;height:18.500px;border-radius:9.500px;background:linear-gradient(180deg,rgba(255,255,255,.55) 0,rgba(255,255,255,.12) 40%,rgba(0,0,0,.15) 60%,rgba(255,255,255,.2) 100%),linear-gradient(90deg,#0a3a5a,#20a8c4);color:#fff;font-size:9.300px;line-height:17px;text-align:center;text-shadow:0 0 2px #000">Button</div>
<div class="a b" style="left:2px;top:54px;width:66px;height:18.500px;border-radius:2.500px;border:1px solid #333;background:linear-gradient(180deg,rgba(225,225,245,.55) 0,rgba(200,200,225,.22) 40%,rgba(255,255,255,0) 48%),radial-gradient(ellipse 62% 95% at 50% 108%,#7a6048 0,#2a2018 100%);color:#fff;font-size:9.300px;line-height:16px;text-align:center;text-shadow:0 0 2px #000">Button</div>
<div class="a b" style="left:72px;top:54px;width:66px;height:18.500px;border-radius:2.500px;border:1px solid #333;background:linear-gradient(180deg,rgba(225,225,245,.55) 0,rgba(200,200,225,.22) 40%,rgba(255,255,255,0) 48%),radial-gradient(ellipse 62% 95% at 50% 108%,#8a8a50 0,#2a2a18 100%);color:#fff;font-size:9.300px;line-height:16px;text-align:center;text-shadow:0 0 2px #000">Button</div>
<div class="a b" style="left:141px;top:54px;width:66px;height:18.500px;border-radius:2.500px;border:1px solid #333;background:linear-gradient(180deg,rgba(225,225,245,.55) 0,rgba(200,200,225,.22) 40%,rgba(255,255,255,0) 48%),radial-gradient(ellipse 62% 95% at 50% 108%,#8a8a8a 0,#2a2a2a 100%);color:#fff;font-size:9.300px;line-height:16px;text-align:center;text-shadow:0 0 2px #000">Button</div>
<div class="a b" style="left:211px;top:54px;width:65px;height:18.500px;border-radius:9.500px;background:linear-gradient(180deg,rgba(255,255,255,.55) 0,rgba(255,255,255,.12) 40%,rgba(0,0,0,.15) 60%,rgba(255,255,255,.2) 100%),linear-gradient(90deg,#6a3018,#d07040);color:#fff;font-size:9.300px;line-height:17px;text-align:center;text-shadow:0 0 2px #000">Button</div>
<div class="a b" style="left:280px;top:54px;width:65px;height:18.500px;border-radius:9.500px;background:linear-gradient(180deg,rgba(255,255,255,.55) 0,rgba(255,255,255,.12) 40%,rgba(0,0,0,.15) 60%,rgba(255,255,255,.2) 100%),linear-gradient(90deg,#6a6a18,#c8c850);color:#fff;font-size:9.300px;line-height:17px;text-align:center;text-shadow:0 0 2px #000">Button</div>
<div class="a b" style="left:349px;top:54px;width:65.5px;height:18.500px;border-radius:9.500px;background:linear-gradient(180deg,rgba(255,255,255,.55) 0,rgba(255,255,255,.12) 40%,rgba(0,0,0,.15) 60%,rgba(255,255,255,.2) 100%),linear-gradient(90deg,#5a5a5a,#b0b0b0);color:#fff;font-size:9.300px;line-height:17px;text-align:center;text-shadow:0 0 2px #000">Button</div>
</div>
<div class="a" style="left:578px;top:404px;width:12px;height:76px;background:#f0f0f0;border-left:1px solid #e4e4e4"></div>
<div class="a" style="left:579px;top:415px;width:10px;height:40px;background:linear-gradient(90deg,#f4f4f4,#dcdcdc 50%,#cfcfcf);border:1px solid #9a9a9a;border-radius:2px"></div>
<div class="a" style="left:581.500px;top:432px;width:5px;height:5px;background:repeating-linear-gradient(#777 0 1px,transparent 1px 2px)"></div>
<svg class="a" style="left:580px;top:407px" width="7" height="5" viewBox="0 0 7 5"><path d="M1 4l2.500-3 2.500 3z" fill="#333"/></svg>
<svg class="a" style="left:580px;top:472px" width="7" height="5" viewBox="0 0 7 5"><path d="M1 1l2.500 3 2.500-3z" fill="#333"/></svg>
<div class="a" style="left:7px;top:480px;width:787px;height:13px;background:linear-gradient(#f6f6f6,#e9e9e9);border-top:1px solid #cfcfcf"></div>
<div class="a" style="left:564px;top:482px;width:1px;height:10px;background:#d0d0d0"></div><div class="a" style="left:650px;top:482px;width:1px;height:10px;background:#d0d0d0"></div>
<div class="a" style="left:716px;top:482px;width:1px;height:10px;background:#d0d0d0"></div>
<div class="a" style="left:784px;top:482px;width:1px;height:10px;background:#d0d0d0"></div>
</div></body></html>
